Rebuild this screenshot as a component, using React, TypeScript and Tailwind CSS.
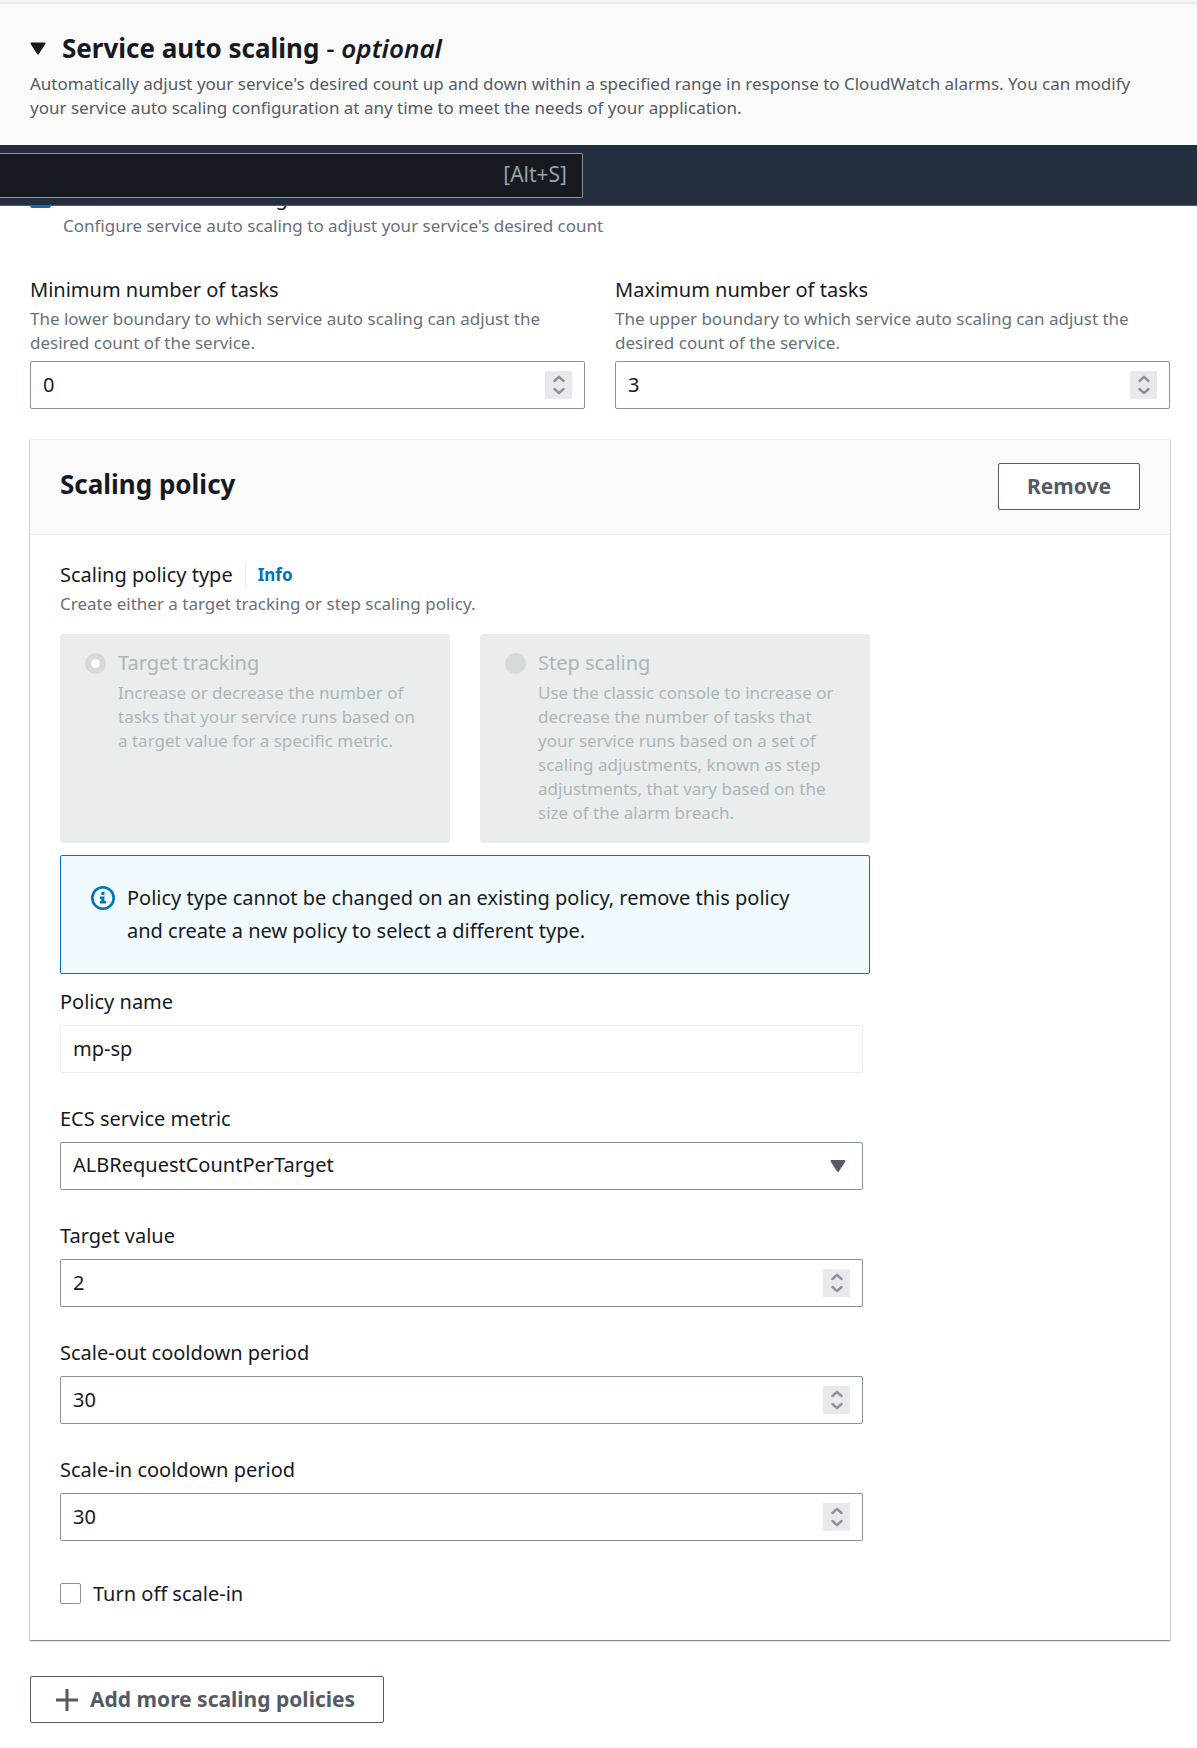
import { useId, useState } from "react";
import type { ReactNode } from "react";

function Spinner() {
  return (
    <span className="pointer-events-none absolute inset-y-0 right-[13px] flex items-center">
      <span className="flex h-7 w-[27px] items-center justify-center bg-[#e9e8ed]">
        <svg width="12" height="20" viewBox="0 0 12 20" fill="none" stroke="#8f8f9d" strokeWidth="2.4" strokeLinecap="round" strokeLinejoin="round" aria-hidden="true">
          <path d="M1.5 6 6 1.8 10.5 6M1.5 14 6 18.2 10.5 14" />
        </svg>
      </span>
    </span>
  );
}

const control =
  "block h-12 w-full appearance-none rounded-[2px] border bg-white px-3 pb-0.5 text-[20px] leading-6 text-[#16191f] outline-none [-moz-appearance:textfield] [&::-webkit-inner-spin-button]:appearance-none";

function Field({ label, hint, children }: { label: string; hint?: string; children: (id: string) => ReactNode }) {
  const id = useId();
  return (
    <div>
      <label htmlFor={id} className="block text-[20px] leading-8">
        {label}
      </label>
      {hint ? <p className="pt-px pb-1.5 text-[17px] leading-6 text-[#687078]">{hint}</p> : <div className="h-[7px]" />}
      {children(id)}
    </div>
  );
}

function NumberField({ label, hint, value }: { label: string; hint?: string; value: number }) {
  return (
    <Field label={label} hint={hint}>
      {(id) => (
        <div className="relative">
          <input id={id} type="number" defaultValue={value} className={control + " border-[#879596]"} />
          <Spinner />
        </div>
      )}
    </Field>
  );
}

function Tile({ title, text, checked }: { title: string; text: string; checked?: boolean }) {
  return (
    <label className="flex gap-3 rounded-[3px] bg-[#eaeded] px-[25px] pt-3 pb-[18px] text-[#aab7b8]">
      <input
        type="radio"
        name="policy-type"
        disabled
        defaultChecked={checked}
        className="mt-[7px] size-[21px] shrink-0 appearance-none rounded-full bg-[#d5dbdb] checked:border-[6px] checked:border-[#d5dbdb] checked:bg-white"
      />
      <span>
        <span className="block text-[20px] leading-[34px]">{title}</span>
        <span className="block pt-px text-[17px] leading-6">{text}</span>
      </span>
    </label>
  );
}

export default function App() {
  const [open, setOpen] = useState(true);
  return (
    <main className="min-h-screen bg-white font-['Noto_Sans',sans-serif] text-[#16191f]">
      <header className="border-t-2 border-[#f2f3f3] bg-[#fafafa]">
        <div className="border-t-2 border-[#eaeded] px-[30px] pt-[26px] pb-[25px]">
          <button type="button" onClick={() => setOpen(!open)} className="flex items-center gap-4 text-left">
            <svg width="16" height="14" viewBox="0 0 16 14" className={open ? "" : "-rotate-90"} aria-hidden="true">
              <path d="M1.5 2.5h13L8 12.5z" fill="#16191f" stroke="#16191f" strokeWidth="2" strokeLinejoin="round" />
            </svg>
            <h2 className="text-[26px] leading-9 font-bold">
              Service auto scaling <span className="font-medium">-</span> <em className="font-semibold">optional</em>
            </h2>
          </button>
          <p className="pt-1.5 text-[17px] leading-6 text-[#545b64]">
            Automatically adjust your service's desired count up and down within a specified range in response to CloudWatch alarms. You can modify your service auto scaling configuration at any time to meet the needs of your application.
          </p>
        </div>
      </header>

      <nav className="relative z-10 flex h-[61px] items-center border-b border-[#545b64] bg-[#232f3e]">
        <div className="relative w-[583px]">
          <input
            type="search"
            aria-label="Search"
            className="block h-[45px] w-full appearance-none rounded-r-[2px] border border-l-0 border-[#879596] bg-[#16191f] px-4 text-[20px] text-white outline-none"
          />
          <span className="pointer-events-none absolute inset-y-0 right-4 flex items-center text-[21px] text-[#95a5a6]">[Alt+S]</span>
        </div>
      </nav>

      {open && (
        <section className="pr-[27px] pl-[30px]">
          <label className="-mt-6 flex gap-3">
            <input type="checkbox" defaultChecked className="mt-[5px] size-[21px] shrink-0 appearance-none rounded-[2px] bg-[#0073bb]" />
            <span>
              <span className="block text-[20px] leading-8">Use service auto scaling</span>
              <span className="block text-[17px] leading-6 text-[#687078]">Configure service auto scaling to adjust your service's desired count</span>
            </span>
          </label>

          <div className="grid grid-cols-2 gap-[30px] pt-9">
            <NumberField label="Minimum number of tasks" hint="The lower boundary to which service auto scaling can adjust the desired count of the service." value={0} />
            <NumberField label="Maximum number of tasks" hint="The upper boundary to which service auto scaling can adjust the desired count of the service." value={3} />
          </div>

          <section className="mt-[30px] border-t border-[#eaeded] bg-white shadow-[0_1px_1px_0_rgba(0,28,36,0.3),1px_1px_1px_0_rgba(0,28,36,0.15),-1px_1px_1px_0_rgba(0,28,36,0.15)]">
            <div className="flex items-center justify-between border-b border-[#eaeded] bg-[#fafafa] px-[30px] pt-[23px] pb-6">
              <h3 className="pb-1.5 text-[26px] leading-9 font-bold">Scaling policy</h3>
              <button type="button" className="h-[47px] rounded-[2px] border border-[#545b64] bg-white px-7 text-[21px] font-bold text-[#545b64]">
                Remove
              </button>
            </div>

            <div className="p-[30px] pt-[26px]">
              <div className="flex items-center">
                <span className="text-[20px] leading-7">Scaling policy type</span>
                <a href="#info" className="ml-3 border-l border-[#eaeded] pl-3 text-[17px] leading-[26px] font-bold text-[#0073bb]">
                  Info
                </a>
              </div>
              <p className="text-[17px] leading-[29px] text-[#687078]">Create either a target tracking or step scaling policy.</p>

              <div className="max-w-[810px]">
                <div role="radiogroup" aria-label="Scaling policy type" className="mt-4 grid grid-cols-2 gap-[30px]">
                  <Tile checked title="Target tracking" text="Increase or decrease the number of tasks that your service runs based on a target value for a specific metric." />
                  <Tile title="Step scaling" text="Use the classic console to increase or decrease the number of tasks that your service runs based on a set of scaling adjustments, known as step adjustments, that vary based on the size of the alarm breach." />
                </div>
                <div role="note" className="mt-3 flex gap-3 rounded-[2px] border border-[#0073bb] bg-[#f1faff] pt-[25px] pr-12 pb-[26px] pl-[30px]">
                  <svg width="24" height="24" viewBox="0 0 24 24" className="mt-[5px] shrink-0" aria-hidden="true">
                    <circle cx="12" cy="12" r="10.7" fill="none" stroke="#0073bb" strokeWidth="2.6" />
                    <path d="M10.4 6h3v3h-3zM9 10.5h4.4V15H15v2.6H9V15h1.4v-1.9H9z" fill="#0073bb" />
                  </svg>
                  <p className="text-[20px] leading-[33px]">Policy type cannot be changed on an existing policy, remove this policy and create a new policy to select a different type.</p>
                </div>
              </div>

              <div className="grid max-w-[803px] gap-[30px] pt-3">
                <Field label="Policy name">{(id) => <input id={id} readOnly defaultValue="mp-sp" className={control + " border-[#eaeded]"} />}</Field>
                <Field label="ECS service metric">
                  {(id) => (
                    <div className="relative">
                      <select id={id} className={control + " border-[#879596]"}>
                        <option>ALBRequestCountPerTarget</option>
                      </select>
                      <svg width="16" height="14" viewBox="0 0 16 14" className="pointer-events-none absolute top-[17px] right-[17px]" aria-hidden="true">
                        <path d="M1.5 2h13L8 12z" fill="#545b64" stroke="#545b64" strokeWidth="2" strokeLinejoin="round" />
                      </svg>
                    </div>
                  )}
                </Field>
                <NumberField label="Target value" value={2} />
                <NumberField label="Scale-out cooldown period" value={30} />
                <NumberField label="Scale-in cooldown period" value={30} />
              </div>

              <label className="mt-9 flex items-center gap-3 text-[20px] leading-[33px]">
                <input type="checkbox" className="size-[21px] appearance-none rounded-[2px] border border-[#879596] bg-white checked:bg-[#0073bb]" />
                Turn off scale-in
              </label>
            </div>
          </section>

          <button type="button" className="mt-9 mb-6 flex h-[47px] items-center gap-3 rounded-[2px] border border-[#545b64] bg-white pr-7 pl-[25px] text-[21px] font-bold text-[#545b64]">
            <svg width="22" height="22" viewBox="0 0 22 22" fill="none" stroke="#545b64" strokeWidth="3" aria-hidden="true">
              <path d="M11 0v22M0 11h22" />
            </svg>
            Add more scaling policies
          </button>
        </section>
      )}
    </main>
  );
}
